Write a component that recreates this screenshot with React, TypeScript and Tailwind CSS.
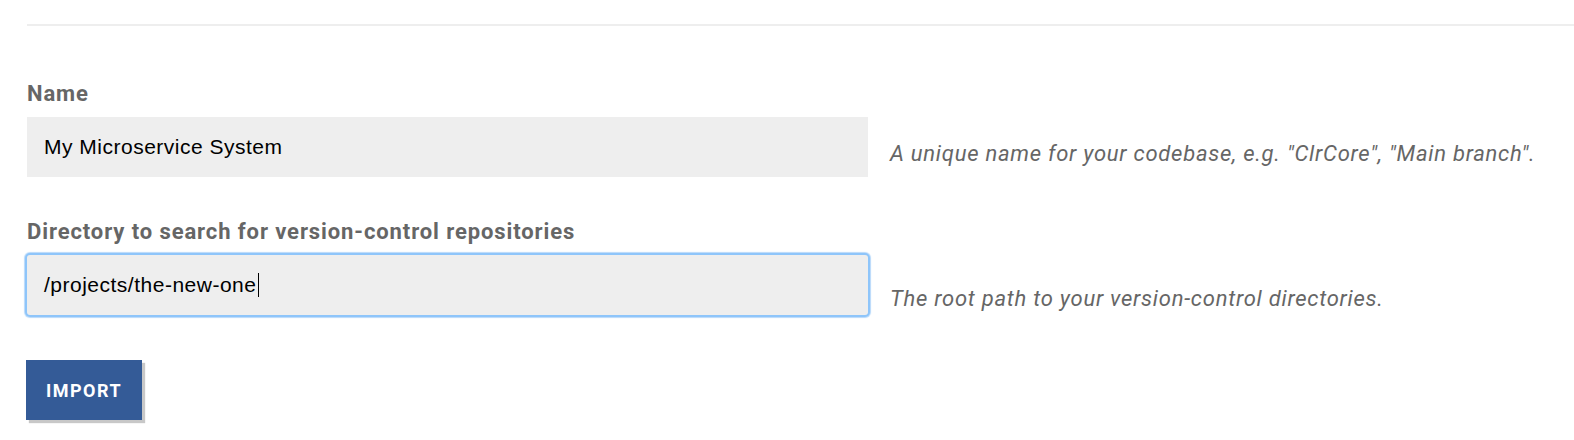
const labelCls = "font-['Roboto',sans-serif] text-[22px] leading-[26px] font-bold tracking-[0.9px] text-[#666]";
const helpCls = "ml-[22px] font-['Roboto',sans-serif] text-[22px] leading-[26px] italic tracking-[0.75px] text-[#666] whitespace-nowrap";
const boxCls = "w-[841px] h-[60px] bg-[#eee] flex items-center pl-[17px] font-['Liberation_Sans',Arial,sans-serif] text-[21px] tracking-[0.5px] text-black";

const App = () => {
  return (
    <div className="min-h-[440px] w-full bg-white pl-[27px] pt-6">
      {/* top divider */}
      <div className="h-[2px] bg-[#eee]" />

      {/* Name */}
      <div className="mt-[55px]">
        <label className={labelCls}>Name</label>
        <div className="mt-[10px] flex items-start">
          <div className={boxCls}>My Microservice System</div>
          <p className={`${helpCls} pt-[24px]`}>
            A unique name for your codebase, e.g. "ClrCore", "Main branch".
          </p>
        </div>
      </div>

      {/* Directory */}
      <div className="mt-[42px]">
        <label className={labelCls}>Directory to search for version-control repositories</label>
        <div className="mt-[10px] flex items-start">
          <div
            className={`${boxCls} rounded-[3px] shadow-[0_0_0_2px_#8ec5fa,0_0_1px_3px_#b8d9fa]`}
          >
            /projects/the-new-one
            <span className="inline-block w-px h-[24px] ml-[2px] bg-black" />
          </div>
          <p className={`${helpCls} pt-[31px]`}>
            The root path to your version-control directories.
          </p>
        </div>
      </div>

      {/* Import */}
      <button className="mt-[45px] -ml-px w-[116px] h-[60px] bg-[#345b97] text-white font-['Roboto',sans-serif] text-[18px] font-bold tracking-[1.5px] shadow-[3px_3px_1px_#c8c8c8]">
        IMPORT
      </button>
    </div>
  );
};

export default App;
